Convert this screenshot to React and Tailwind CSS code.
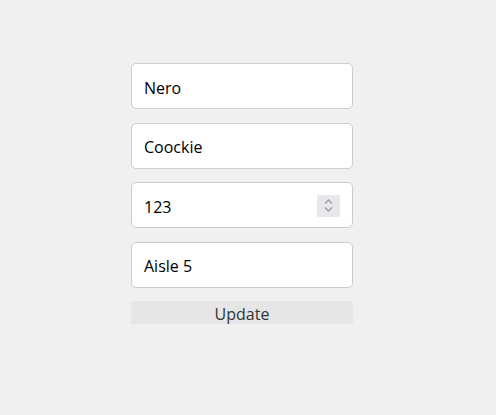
import React from 'react';

function Field({ value, spinner }) {
  return (
    <div className="flex h-[46px] items-center justify-between rounded-[5px] border border-[#cccccc] bg-white pl-3 pr-[12px]">
      <span className="pt-[3px] text-[16px] text-black">{value}</span>
      {spinner && (
        <div className="mt-[1px] flex h-[22px] w-[23px] flex-col items-center justify-center gap-[3px] bg-[#e8e8ec]">
          <svg width="9" height="5" viewBox="0 0 9 5" fill="none" stroke="#9a9aa2" strokeWidth="1.3">
            <path d="M1 4.5 L4.5 1 L8 4.5" />
          </svg>
          <svg width="9" height="5" viewBox="0 0 9 5" fill="none" stroke="#9a9aa2" strokeWidth="1.3">
            <path d="M1 0.5 L4.5 4 L8 0.5" />
          </svg>
        </div>
      )}
    </div>
  );
}

export default function App() {
  const fields = [
    { value: 'Nero' },
    { value: 'Coockie' },
    { value: '123', spinner: true },
    { value: 'Aisle 5' },
  ];

  return (
    <div className="min-h-[415px] bg-[#f0f0f0] pl-[131px] pt-[63px]" style={{ fontFamily: '"Open Sans", "Noto Sans", sans-serif' }}>
      <div className="flex w-[222px] flex-col gap-[13.5px]">
        {fields.map((f) => (
          <Field key={f.value} value={f.value} spinner={f.spinner} />
        ))}
        <button className="h-[23px] bg-[#e6e6e6] pt-[2px] text-[16px] leading-[23px] text-[#333333]">Update</button>
      </div>
    </div>
  );
}
